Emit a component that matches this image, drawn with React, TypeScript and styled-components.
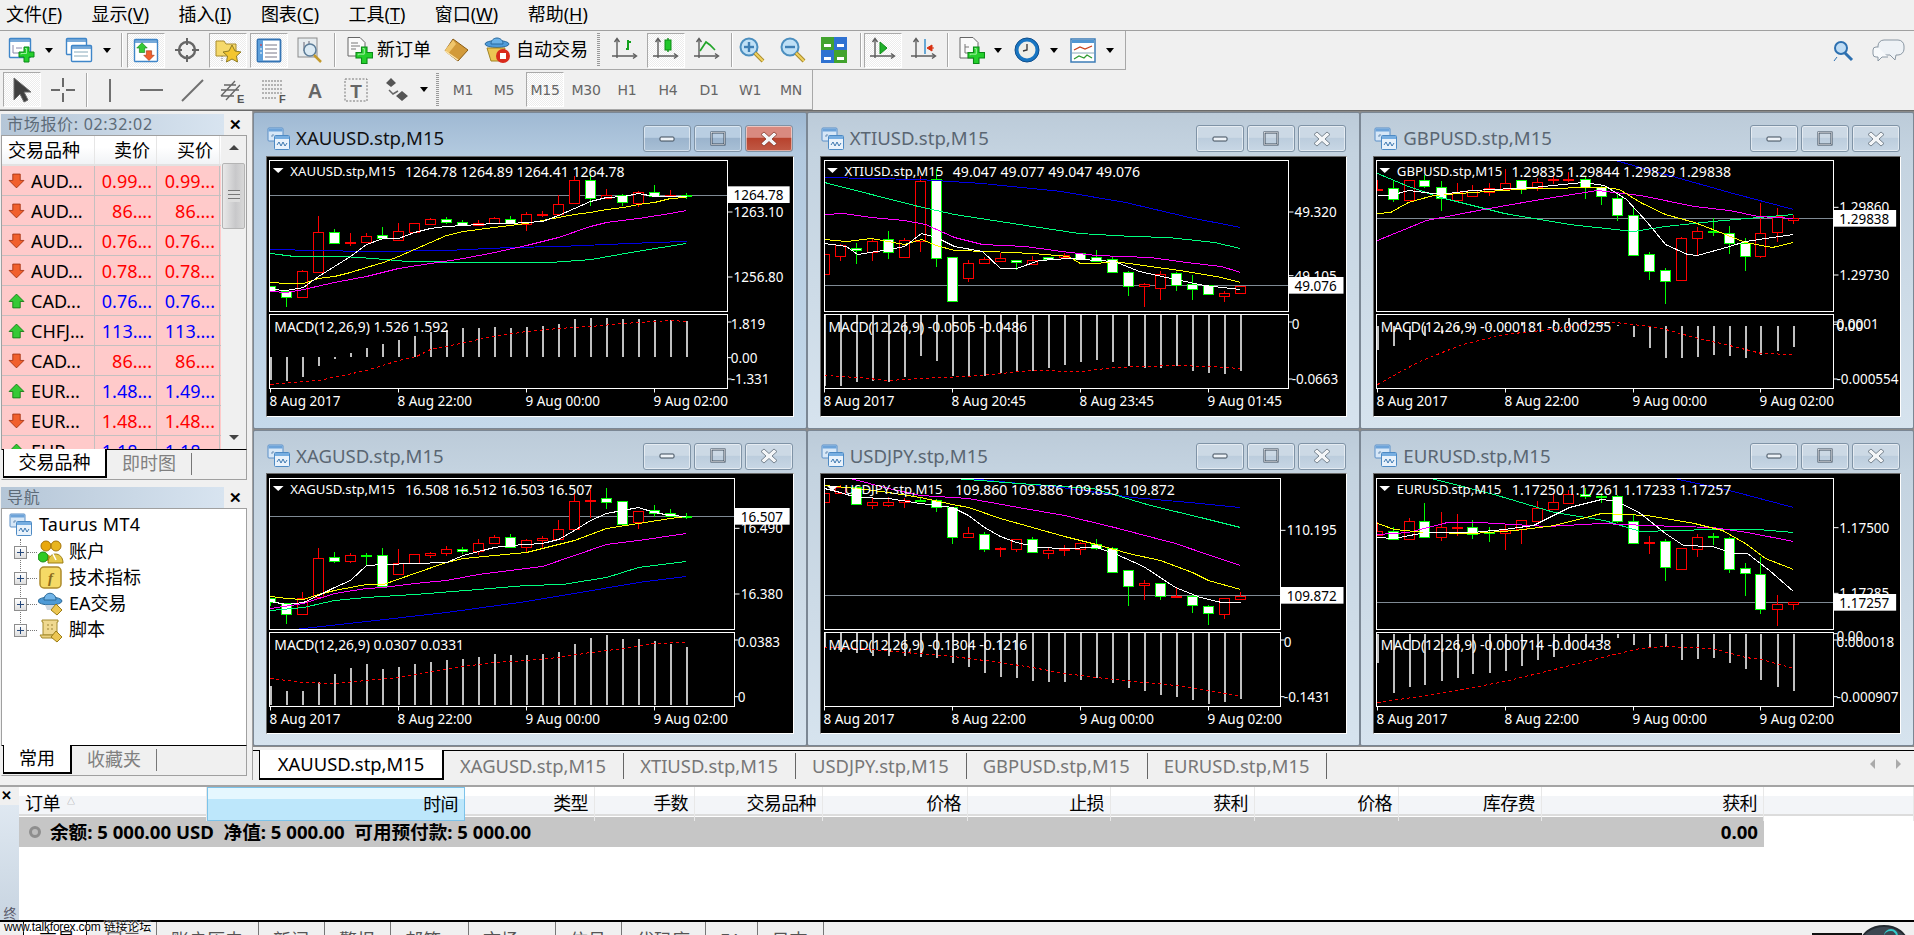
import React from 'react';
import styled, { createGlobalStyle } from 'styled-components';

const FONT = `"Noto Sans", "Noto Sans CJK SC", sans-serif`;

const Global = createGlobalStyle`
  html, body { margin: 0; padding: 0; background: #f0f0f0; overflow: hidden; }
  * { box-sizing: border-box; }
  #root { width: 1914px; height: 935px; }
`;

const Page = styled.div`
  position: relative; width: 1914px; height: 935px; overflow: hidden; display: flex; flex-direction: column;
  background: #f0f0f0; font: 18px/1.2 ${FONT}; color: #000;
`;

/* ---------- menu ---------- */
const MenuBar = styled.div`
  flex: none; height: 31px; display: flex; align-items: center; gap: 29.4px; padding: 0 0 0 6px;
  border-bottom: 1px solid #a0a0a0; background: #f0f0f0;
`;
const MenuItem = styled.span`
  font-size: 18px; white-space: nowrap; u { text-decoration: underline; text-underline-offset: 2px; }
`;

/* ---------- toolbars ---------- */
const ToolRow = styled.div`
  flex: none; display: flex; align-items: stretch; height: ${p => p.$h}px;
`;
const Toolbar = styled.div`
  width: ${p => p.$w}px; display: flex; align-items: center; gap: 3px; padding-left: 3px;
  border-right: 1px solid #a8a8a8; border-bottom: 1px solid #a8a8a8;
`;
const RightTools = styled.div`
  flex: 1; display: flex; justify-content: flex-end; align-items: center; gap: 17px; padding: 0 8px 0 0;
`;
const ToolBtn = styled.div`
  flex: none; width: ${p => p.$w || 38}px; height: 35px; display: flex; align-items: center; justify-content: ${p => p.$w ? 'flex-start' : 'center'};
  gap: 4px; padding-left: ${p => p.$w ? 5 : 0}px; font-size: 18px; color: #000; white-space: nowrap;
  ${p => p.$on ? `
    border: 1px solid; border-color: #a9a9a9 #fff #fff #a9a9a9;
    background: repeating-conic-gradient(#fff 0 25%, #ececec 0 50%) 0 0 / 2px 2px;
  ` : ''}
`;
const TfLabel = styled.span`
  font: 14px "DejaVu Sans", ${FONT}; color: #666; letter-spacing: -0.3px;
`;
const Drop = styled.div`
  flex: none; width: ${p => p.$w}px; margin-left: -3px; display: flex; align-items: center; justify-content: center;
  &::after { content: ''; border: 4.5px solid transparent; border-top: 5px solid #000; border-bottom: 0; }
`;
const Sep = styled.div`
  flex: none; width: 1px; height: 34px; background: #a8a8a8; box-shadow: 1px 0 0 #fff;
  margin: ${p => p.$m || '0 2px'};
`;
const Gripper = styled.div`
  flex: none; width: 3px; height: 34px; margin: ${p => p.$m || '0 3px 0 2px'};
  background: repeating-linear-gradient(#999 0 1px, #f0f0f0 1px 2px);
`;
const Ic = styled.svg`
  flex: none; display: block;
`;

/* ---------- main ---------- */
const MainRow = styled.div`
  flex: none; height: 670px; display: flex; border-top: 1px solid #6a6a6a;
`;
const LeftCol = styled.div`
  flex: none; width: 253px; display: flex; flex-direction: column; border-right: 1px solid #a0a0a0; background: #f0f0f0;
`;
const Dock = styled.section`
  flex: none; height: ${p => p.$h}px; margin-top: ${p => p.$mt}px; padding: 0 5px 0 1px; display: flex; flex-direction: column;
`;
const DockHead = styled.div`
  flex: none; height: 22px; display: flex; align-items: center;
`;
const DockTitle = styled.div`
  width: 223px; height: 21px; padding-left: 6px; color: #5d6b78; font-size: 16px; line-height: 21px; letter-spacing: .7px;
  background: linear-gradient(90deg, #b5c6d7, #d8e4f0);
`;
const Close = styled.div`
  flex: 1; text-align: center; font: bold 15px/21px "Liberation Sans", sans-serif;
`;
const DockBody = styled.div`
  flex: 1; min-height: 0; display: flex; border: 1px solid #a0a0a0; border-bottom: 0; background: #fff;
`;
const TableWrap = styled.div`
  width: 219px; overflow: hidden; background: #fff;
`;
const MwHead = styled.div`
  height: 30px; display: grid; grid-template-columns: 93px 62px 63px; background: linear-gradient(#fff 40%, #f1f3f6);
  border-bottom: 2px solid #e2e2e2;
`;
const HCell = styled.div`
  font-size: 18px; line-height: 28px; text-align: ${p => p.$l ? 'left' : 'right'}; padding: 0 6px; border-right: 1px solid #e6e6e6;
`;
const MwRow = styled.div`
  height: 30px; display: grid; grid-template-columns: 93px 62px 63px; background: #ffcaca; border-bottom: 1px solid #c4c0c0;
`;
const SymCell = styled.div`
  display: flex; align-items: center; gap: 6px; padding: 1px 0 0 6px; border-right: 1px solid #c4c0c0; white-space: nowrap;
`;
const PriceCell = styled.div`
  color: ${p => p.$up ? '#0000ff' : '#ff0000'}; text-align: right; padding-right: 4px; line-height: 30px; border-right: 1px solid #c4c0c0; white-space: nowrap;
`;
const ScrollBar = styled.div`
  flex: 1; background: #f0f0f0; display: flex; flex-direction: column; align-items: center; padding-top: 9px; position: relative;
`;
const ScrollArrow = styled.div`
  border: 5px solid transparent; ${p => p.$up ? 'border-bottom: 5px solid #444; border-top: 0;' : 'border-top: 5px solid #444; border-bottom: 0;'}
`;
const Thumb = styled.div`
  width: 23px; height: 66px; margin-top: 13px; margin-bottom: auto; border: 1px solid #b4b4b4; border-radius: 2px;
  background: linear-gradient(90deg, #e8e8e8, #c8c8ca 60%, #d8d8d8); display: flex; align-items: center; justify-content: center;
  &::after { content: ''; width: 12px; height: 12px; margin-top: 0; background: repeating-linear-gradient(#777 0 1px, #ddd 1px 4px); }
`;
const ScrollEnd = styled.div`
  height: 20px; padding-top: 6px;
`;
const DockTabs = styled.div`
  flex: none; height: ${p => p.$h || 31}px; display: flex; align-items: stretch; border-top: 1px solid #000; padding-left: 1px; background: #f0f0f0;
  border-left: 1px solid #f0f0f0; border-right: 1px solid #a0a0a0; border-bottom: 1px solid #a0a0a0;
`;
const DockTabOn = styled.div`
  width: ${p => p.$w}px; height: 29px; margin-top: -1px; background: #fff; border: 1px solid #000; border-top: 0; border-right-width: 2px; border-bottom-width: 2px;
  text-align: center; line-height: 26px;
`;
const DockTabOff = styled.div`
  padding: 0 15px; height: 22px; margin-top: 3px; line-height: 20px; color: #808080; border-right: 1px solid #777;
`;
const TreeBox = styled.div`
  flex: 1; position: relative; padding: 2px 0 0 7px; background: #fff;
  &::before { content: ''; position: absolute; left: 18px; top: 30px; height: 92px; border-left: 1px dotted #777; }
`;
const TreeRoot = styled.div`
  display: flex; align-items: center; gap: 6px; height: 28px; letter-spacing: .3px;
`;
const TreeRow = styled.div`
  display: flex; align-items: center; height: 26px; padding-left: 5px; position: relative; white-space: nowrap;
`;
const Expander = styled.div`
  width: 13px; height: 13px; border: 1px solid #8d8d8d; background: linear-gradient(#fff, #dedede); position: relative; flex: none; z-index: 1;
  &::before { content: ''; position: absolute; left: 2px; top: 5px; width: 7px; height: 1px; background: #26487a; }
  &::after { content: ''; position: absolute; left: 5px; top: 2px; width: 1px; height: 7px; background: #26487a; }
`;
const Dots = styled.div`
  width: 10px; border-top: 1px dotted #777; flex: none; margin-right: 1px;
`;
const TreeLabel = styled.span`
  margin-left: 5px;
`;

/* ---------- MDI ---------- */
const RightCol = styled.div`
  flex: 1; min-width: 0; display: flex; flex-direction: column;
`;
const Mdi = styled.div`
  flex: none; height: 636px; padding-top: 1px; background: #8a8a8a; display: grid;
  grid-template-columns: repeat(3, 1fr); grid-template-rows: 317px 316px; row-gap: 1px;
`;
const Win = styled.div`
  min-width: 0; display: flex; flex-direction: column; padding: 0 12px 0 12px; border: 1px solid #7b8794; border-radius: 2px;
  background: ${p => p.$on ? 'linear-gradient(#9fb9d3, #b2c9df 40px, #c5d9ea)' : 'linear-gradient(#bccbd9, #c4d3e0 40px, #d6e3ee)'};
`;
const WinHead = styled.div`
  flex: none; height: ${p => p.$h}px; display: flex; align-items: center; padding: 8px 1px 0 1px;
`;
const WinTitle = styled.div`
  flex: 1; margin-left: 5px; font-size: 18.6px; color: ${p => p.$on ? '#111' : '#5a6672'}; white-space: nowrap;
`;
const WinBtn = styled.div`
  flex: none; width: 48px; height: 27px; margin-left: 3px; border: 1px solid #7f93a6; border-radius: 3px; display: flex; align-items: center; justify-content: center;
  background: ${p => p.$close ? 'linear-gradient(#d98a80 0 45%, #b8432e 50%, #c05a46)' : p.$on ? 'linear-gradient(#b9cee2 0 45%, #9bb4cd 50%, #a9c0d6)' : 'linear-gradient(#ccd9e5 0 45%, #bccddd 50%, #c8d7e5)'};
  box-shadow: inset 0 0 0 1px rgba(255,255,255,.5);
`;
const Client = styled.div`
  flex: none; height: 261px; border: 1px solid; border-color: #6b6b6b #fff #fff #6b6b6b; background: #000; overflow: hidden;
`;
const ChartSvg = styled.svg`
  display: block; width: 527px; height: 259px; background: #000;
`;
const CTxt = styled.text`
  font: ${p => p.$fs || 13.5}px "Noto Sans", sans-serif; fill: ${p => p.$fill || '#fff'}; dominant-baseline: central;
`;

/* ---------- chart tabs ---------- */
const TabStrip = styled.div`
  flex: none; height: 30px; margin-top: 3px; border-top: 1px solid #000; display: flex; padding-left: 6px; position: relative; background: #f0f0f0;
`;
const ChartTabOn = styled.div`
  flex: none; width: 185px; height: 30px; margin-top: -1px; background: #fff; border: 1px solid #000; border-top: 0; border-right-width: 2px; border-bottom-width: 2px; text-align: center; font-size: 18.4px; line-height: 28px;
`;
const ChartTab = styled.div`
  flex: none; height: 26px; margin-top: 2px; padding: 0 17px 0 16px; font-size: 18.4px; line-height: 25px; color: #777; border-right: 1px solid #666; white-space: nowrap;
`;
const TabArrows = styled.div`
  margin-left: auto; display: flex; align-items: center; gap: 21px; padding: 0 13px 4px 0;
`;
const TabArrow = styled.div`
  border: 5px solid transparent; ${p => p.$l ? 'border-right: 5px solid #aaa; border-left: 0;' : 'border-left: 5px solid #aaa; border-right: 0;'}
`;

/* ---------- terminal ---------- */
const Terminal = styled.div`
  flex: none; height: 150px; margin-top: 5px; display: flex; border-top: 2px solid #a4a4a4; background: #fff;
`;
const TermStrip = styled.div`
  flex: none; width: 19px; display: flex; flex-direction: column; background: #f0f0f0;
`;
const TermClose = styled.div`
  height: 18px; font: bold 13px/17px "Liberation Sans", sans-serif; padding-left: 1px;
`;
const TermStripFill = styled.div`
  flex: 1; display: flex; flex-direction: column; justify-content: flex-end; align-items: center; overflow: hidden;
  background: linear-gradient(#dfe8f1, #c5d2df);
`;
const TermStripLabel = styled.span`
  writing-mode: vertical-rl; font-size: 13px; line-height: 16px; color: #556; margin-bottom: 2px;
`;
const TermMain = styled.div`
  flex: 1; min-width: 0; display: flex; flex-direction: column;
`;
const THead = styled.div`
  flex: none; height: 29px; display: grid; border-bottom: 2px solid #dcdcdc;
  grid-template-columns: 188px 258px 130px 100px 128px 145px 143px 144px 144px 143px 222px 1fr;
  background: linear-gradient(#fff 35%, #f3f5f8 35%, #f3f5f8);
`;
const TCell = styled.div`
  font-size: 18px; line-height: 32px; padding: 0 6px 0 6px; text-align: ${p => p.$l ? 'left' : 'right'}; border-right: 1px solid #e8e8e8; letter-spacing: -0.6px;
  ${p => p.$hi ? 'background: linear-gradient(#e5f7fe 35%, #bde7fb 35%); border: 1px solid #7cc3ea;' : ''}
  position: relative;
`;
const SortMark = styled.span`
  position: absolute; left: 48px; top: 9px; font-size: 8px; line-height: 10px; color: #999;
`;
const BalRow = styled.div`
  flex: none; width: 1745px; height: 30px; margin-top: 1px; background: #c6c6c6; display: flex; align-items: center; padding: 0 6px 0 10px; font-weight: 700; font-size: 18.6px; white-space: pre;
`;
const BalDot = styled.span`
  width: 12px; height: 12px; margin-right: 9px; border-radius: 50%; background: #bdbdbd; border: 3px solid #8e8e8e; flex: none;
`;
const BalVal = styled.span`
  margin-left: auto;
`;
const TermFill = styled.div`
  flex: 1; background: #fff;
`;
const BottomTabs = styled.div`
  flex: none; height: 15px; border-top: 2px solid #000; display: flex; background: #f0f0f0; overflow: hidden;
  margin-left: -19px; padding-left: 23px; position: relative;
`;
const BTabOn = styled.div`
  flex: none; width: 64px; padding-left: 15px; height: 30px; margin-top: -2px; border-left: 1px solid #000; border-right: 1px solid #000; background: #fff; padding-top: 7px; line-height: 24px; font-size: 18px;
`;
const BTab = styled.div`
  flex: none; padding: 6px 15px 0 ${p => p.$first ? 18 : 14}px; height: 30px; color: #555; border-right: 1px solid #777; line-height: 24px; font-size: 18px; display: flex; white-space: nowrap;
`;
const Badge = styled.span`
  width: ${p => p.$w}px; margin-left: 3px; height: 3px; margin-top: 7px; background: radial-gradient(circle, #f00 1.3px, transparent 1.6px) 0 0 / 7px 3px repeat-x;
`;
const Watermark = styled.div`
  position: absolute; left: 4px; bottom: 1px; font: 12px/14px "Liberation Sans", "Noto Sans CJK SC", sans-serif; color: #000; text-shadow: 0 0 2px #fff, 0 0 2px #fff;
  white-space: nowrap; letter-spacing: -0.2px;
`;
const Corner = styled.div`
  position: absolute; right: 6px; bottom: -26px; width: 48px; height: 36px; border-radius: 50%; background: #3c4650; border: 2px solid #242a30;
  &::before { content: ''; position: absolute; left: -50px; top: 6px; width: 50px; height: 2px; background: #111; }
  &::after { content: ''; position: absolute; right: 8px; top: 2px; width: 12px; height: 12px; border-top: 2px solid #3cc; border-right: 2px solid #3cc; border-radius: 50%; }
`;

/* ---------- icons ---------- */
const S = ({ w = 28, h = 28, vb, children }: any) => <Ic width={w} height={h} viewBox={vb || `0 0 ${w} ${h}`}>{children}</Ic>;
const Plus = ({ x = 0, y = 0, s = 1 }: any) => (
  <g transform={`translate(${x} ${y}) scale(${s})`}>
    <path d="M5 0h5v5h5v5h-5v5H5v-5H0V5h5z" fill="#25cf2c" stroke="#0b8a18" strokeWidth="1" />
    <path d="M6 1.500h1.500v5H2v1" fill="none" stroke="#b7f7b7" strokeWidth=".8" />
  </g>
);
const Axes = ({ x = 0, y = 0 }: any) => (
  <g transform={`translate(${x} ${y})`} stroke="#5c5c5c" fill="none" strokeWidth="1.4">
    <path d="M6 3v19M1 20h24" />
    <path d="M3.500 6L6 2.500 8.500 6M22 17.500L25.500 20 22 22.500" />
  </g>
);
const Pane = ({ x, y, w, h, c = '#3f86c9' }: any) => (
  <g>
    <rect x={x + .5} y={y + .5} width={w} height={h} rx="1" fill="#fff" stroke={c} strokeWidth="1.4" />
    <rect x={x + 1} y={y + 1} width={w - 1} height="3" fill={c} opacity=".7" />
  </g>
);
const Arrow = ({ up, x = 0, y = 0, s = 1 }: any) => (
  <g transform={`translate(${x} ${y}) scale(${s})`}>
    {up
      ? <path d="M8 1l7 7h-3.500v6h-7V8H1z" fill="#35c935" stroke="#117a11" strokeWidth=".8" />
      : <path d="M4.500 1h7v6H15l-7 7-7-7h3.500z" fill="#f1602c" stroke="#a23210" strokeWidth=".8" />}
  </g>
);
const IcNew = () => <S><Pane x={1} y={2} w={21} h={19} /><path d="M5 9v8h13M8 12h6" stroke="#88a" fill="none" /><Plus x={11} y={11} /></S>;
const IcProfile = () => <S><Pane x={1} y={2} w={20} h={16} /><Pane x={6} y={9} w={20} h={16} /><path d="M9 16h14M9 20h14" stroke="#8ab" fill="none" /></S>;
const IcMarket = () => <S><Pane x={2} y={3} w={23} h={22} /><Arrow up x={4} y={6} s={.75} /><Arrow x={11} y={14} s={.75} /></S>;
const IcCross = () => <S><circle cx="14" cy="14" r="8" fill="none" stroke="#666" strokeWidth="2.400" /><path d="M14 2v7M14 19v7M2 14h7M19 14h7" stroke="#666" strokeWidth="2" /></S>;
const IcFav = () => <S><path d="M2 5h8l2 3h10v12H2z" fill="#f5d96b" stroke="#a98b2c" /><path d="M18 9l3 6 6 1-4.500 4 1 6-5.500-3-5.500 3 1-6L9 16l6-1z" fill="#f4c62e" stroke="#8f7b20" /><path d="M8 20v6" stroke="#777" strokeDasharray="1 1" /></S>;
const IcNav = () => <S><rect x="2.500" y="3.500" width="23" height="22" rx="1" fill="#fff" stroke="#3575b5" strokeWidth="1.800" /><rect x="3" y="4" width="5" height="21" fill="#5ea0db" /><path d="M10 9h12M10 13h12M10 17h12M10 21h12" stroke="#778" /><path d="M5 9h2" stroke="#e22" /><path d="M5 13h2M5 17h2" stroke="#fff" /></S>;
const IcData = () => <S><rect x="2" y="2" width="19" height="19" fill="#e7ecef" stroke="#8b8b8b" /><path d="M8 6v9M13 5v10" stroke="#667" /><circle cx="14" cy="14" r="6" fill="#dbeaf4" stroke="#5c7d99" strokeWidth="1.500" /><path d="M18 19l7 7" stroke="#c49a2c" strokeWidth="2.500" /></S>;
const IcOrder = () => <S><path d="M3 1.500h12l5 5V20H3z" fill="#fafafa" stroke="#666" /><path d="M6 7h7M6 10h9M6 13h5" stroke="#777" /><Plus x={11} y={11} s={1.1} /></S>;
const IcBook = () => <S><path d="M10 3l15 11-10 11L2 15z" fill="#d29a3a" stroke="#8a5c14" /><path d="M10 4L2 14l3 4 8-10z" fill="#f0c66c" /><path d="M15 24L2 15" stroke="#fbe4ae" strokeWidth="1.500" /></S>;
const IcAuto = () => <S><ellipse cx="13" cy="8" rx="12" ry="3.500" fill="#4f9bd9" stroke="#2a6a9e" /><path d="M7 8c0-8 12-8 12 0z" fill="#6bb2e8" stroke="#2a6a9e" /><path d="M3 12h18l-4 13H7z" fill="#ecc552" stroke="#a18425" /><circle cx="19" cy="20" r="7" fill="#d92a1c" /><rect x="16" y="17" width="6" height="6" fill="#fff" /></S>;
const IcBars = () => <S><Axes /><path d="M17 4v10M17 6h3M17 13h-2" stroke="#14a11e" strokeWidth="2" fill="none" /></S>;
const IcCandle = () => <S><Axes /><path d="M16 2v14" stroke="#0d8d17" strokeWidth="1.400" /><rect x="13" y="4" width="6" height="10" fill="#22c82b" stroke="#0d8d17" /></S>;
const IcLine = () => <S><Axes /><path d="M7 15l6-9 4 3 5 5" stroke="#22a52a" strokeWidth="1.700" fill="none" /></S>;
const IcZoom = ({ minus }: any) => <S><circle cx="11" cy="11" r="8.500" fill="#bfe0f6" stroke="#4c8fbf" strokeWidth="2" /><path d="M6 11h10" stroke="#3f7fb4" strokeWidth="2.400" />{!minus && <path d="M11 6v10" stroke="#3f7fb4" strokeWidth="2.400" />}<path d="M17 17l8 8" stroke="#a98c2c" strokeWidth="4" /><path d="M17 17l8 8" stroke="#f0d25f" strokeWidth="2" /></S>;
const IcTile = () => <S><rect x="1" y="1" width="13" height="13" fill="#42a32e" /><rect x="14" y="1" width="13" height="13" fill="#2f72d1" /><rect x="1" y="14" width="13" height="13" fill="#2f72d1" /><rect x="14" y="14" width="13" height="13" fill="#42a32e" /><path d="M4 8h7v3H4zM17 8h7v3h-7zM4 21h7v3H4zM17 21h7v3h-7z" fill="#fff" /></S>;
const IcShift = () => <S><Axes /><path d="M11 6l7 6-7 6z" fill="#20b02a" stroke="#0d8d17" /></S>;
const IcScroll = () => <S><Axes /><path d="M15 3v15" stroke="#3a90cc" strokeWidth="1.500" /><path d="M24 12h-4M22 9l-5 3 5 3z" stroke="#d83010" fill="#d83010" /></S>;
const IcTpl = () => <S><path d="M3 1.500h13l5 5V22H3z" fill="#fafafa" stroke="#666" /><path d="M8 8v9h6M8 11h4" stroke="#777" fill="none" /><Plus x={11} y={11} s={1.1} /></S>;
const IcClock = () => <S><circle cx="14" cy="14" r="12" fill="#1976c2" stroke="#0f4e8c" /><circle cx="14" cy="14" r="8.500" fill="#efefe8" /><path d="M14 8v6l-4 1" stroke="#333" fill="none" strokeWidth="1.300" /></S>;
const IcIndi = () => <S><rect x="2" y="3" width="24" height="23" fill="#fff" stroke="#3c7cb6" strokeWidth="1.500" /><rect x="3" y="4" width="22" height="3" fill="#5096d2" /><path d="M5 14l6-3 5 2 7-3" stroke="#c8401c" fill="none" strokeWidth="1.300" /><path d="M3 17h22" stroke="#8ab" /><path d="M5 23l5-3 5 2 3-3 5 3" stroke="#2f9a33" fill="none" strokeWidth="1.300" /></S>;
const IcSearch = () => <S w={24} h={24}><circle cx="10" cy="9" r="6" fill="#bfdcf4" stroke="#2d70b0" strokeWidth="2" /><path d="M6 18l-3 4" stroke="#2d70b0" /><path d="M14 14l7 7" stroke="#2d70b0" strokeWidth="3" /></S>;
const IcChat = () => <S w={34} h={26}><path d="M12 2h14a6 6 0 016 6v3a6 6 0 01-6 6h-2l-1 5-5-5h-6a6 6 0 01-6-6V8a6 6 0 016-6z" fill="#eef2f6" stroke="#8a97a3" /><path d="M6 9H4a3 3 0 00-3 3v4a3 3 0 003 3h2v4l4-4h6" fill="#f7f9fb" stroke="#8a97a3" /></S>;
const IcCursor = () => <S w={24} h={28}><path d="M4 2v22l6-6 4 8 4-2-4-8h7z" fill="#3f3f3f" stroke="#6a6a6a" /></S>;
const IcPlusT = () => <S><path d="M14 2v9M14 17v9M2 14h9M17 14h9" stroke="#6a6a6a" strokeWidth="2" /></S>;
const IcV = () => <S><path d="M14 3v23" stroke="#707070" strokeWidth="2" /></S>;
const IcH = () => <S><path d="M3 14h23" stroke="#707070" strokeWidth="2" /></S>;
const IcT = () => <S><path d="M4 25L25 4" stroke="#707070" strokeWidth="2" /></S>;
const IcE = () => <S><path d="M2 20L16 5M7 24L21 9M2 14h18M5 9h12M2 20h13" stroke="#666" strokeWidth="1.300" /><text x="18" y="27" fontSize="11" fontWeight="700" fontFamily="Liberation Sans" fill="#555">E</text></S>;
const IcF = () => <S><path d="M2 5h20M2 9h20M2 13h20M2 17h20M2 22h15" stroke="#777" strokeDasharray="2 1" /><text x="19" y="27" fontSize="11" fontWeight="700" fontFamily="Liberation Sans" fill="#555">F</text></S>;
const IcA = () => <S><text x="14" y="22" textAnchor="middle" fontSize="20" fontWeight="700" fontFamily="Liberation Sans" fill="#666">A</text></S>;
const IcTB = () => <S><rect x="3" y="3" width="22" height="22" fill="none" stroke="#777" strokeDasharray="2 1.500" /><text x="14" y="22" textAnchor="middle" fontSize="19" fontWeight="700" fontFamily="Liberation Sans" fill="#666">T</text></S>;
const IcShapes = () => <S><path d="M8 2l5 5-5 4-5-4zM19 15l6 5-6 5-6-5z" fill="#555" /><path d="M6 14l4 4 5-3" stroke="#666" fill="none" strokeWidth="1.500" /></S>;
const IcWin = ({ w = 24, h = 24 }: any) => (
  <Ic width={w} height={h} viewBox="0 0 24 24">
    <rect x="1" y="1" width="15" height="13" rx="1" fill="#d7e7f7" stroke="#5a8fc7" />
    <rect x="1.500" y="1.500" width="14" height="3" fill="#6da3d9" />
    <path d="M4 9h2v-2M9 8v3" stroke="#6b8fb4" fill="none" />
    <rect x="7.500" y="8.500" width="15" height="14" rx="1" fill="#e9f2fb" stroke="#4d8ac4" />
    <rect x="8" y="9" width="14" height="3" fill="#77aee1" />
    <path d="M10 18l2-3 2 4 2-4 2 4 2-3" stroke="#3d78b0" fill="none" />
  </Ic>
);
const IcPeople = () => <S w={26} h={26}><circle cx="8" cy="7" r="5" fill="#e8a80c" stroke="#a57408" /><circle cx="18" cy="7" r="5" fill="#e8b520" stroke="#a57408" /><path d="M2 22c0-9 12-9 12 0z" fill="#d8a60f" /><circle cx="5" cy="18" r="5" fill="#2fca24" stroke="#1a8a15" /><path d="M10 24c0-12 15-12 15 0z" fill="#e5c748" stroke="#9c7d14" /><path d="M15 15l3 6" stroke="#fff" strokeWidth="1.500" /></S>;
const IcFn = () => <S w={26} h={26}><rect x="2" y="2" width="21" height="21" rx="4" fill="#f5da66" stroke="#ad8b2c" strokeWidth="1.500" /><text x="12.500" y="18" textAnchor="middle" fontSize="15" fontStyle="italic" fontWeight="700" fontFamily="Liberation Serif" fill="#8a6a1c">f</text></S>;
const IcHat = () => <S w={26} h={26}><ellipse cx="12" cy="10" rx="12" ry="4" fill="#4d9ad6" stroke="#2c6a98" /><path d="M6 9c0-9 12-9 12 0z" fill="#72b5e8" stroke="#2c6a98" /><path d="M7 14h10l-3 5H9z" fill="#cfd7df" /><path d="M18 13l6 6-5 5-6-5z" fill="#ecc653" stroke="#9c7d14" /></S>;
const IcScrollDoc = () => <S w={26} h={26}><path d="M4 3h16v2h-1v13H5V5H4z" fill="#f0d990" stroke="#a48a2c" /><path d="M2 18h13v3H4z" fill="#ead07e" stroke="#a48a2c" /><path d="M9 8h2M13 8h2M9 12h2M13 12h2" stroke="#998136" /><path d="M18 14l6 6-5 5-6-5z" fill="#ecc653" stroke="#9c7d14" /></S>;

/* ---------- chart data: coordinates read off the reference ---------- */
type Candle = [string, number, number, number, number];
type ChartSpec = {
  title: string; ohlc: string; ohlcX: number; macd: string; col: number; row: number; rectL: number; rectR: number; x0: number; c: Candle[];
  white: number[][]; yellow: number[][]; magenta: number[][]; green: number[][]; blue: number[][];
  price: number; pLabel: string; boxR: number; axis: [string, number][]; mZero: number; bars: number[]; sig: number[][]; mAxis: [string, number][]; times: string[]; on?: boolean;
};
const C = (s: string): Candle[] => s.trim().split(/\s*\|\s*/).map(r => { const p = r.split(' '); return [p[0], +p[1], +p[2], +p[3], +p[4]] as Candle; });
const T4 = ['8 Aug 2017', '8 Aug 22:00', '9 Aug 00:00', '9 Aug 02:00'];

const charts: ChartSpec[] = [
  {
    title: 'XAUUSD.stp,M15', ohlc: '1264.78 1264.89 1264.41 1264.78', ohlcX: 380, macd: 'MACD(12,26,9) 1.526 1.592', col: 0, row: 0, rectL: 40, rectR: 1322, x0: 43, on: true,
    c: C(`g 530 545 530 545|g 545 565 545 593|r 487 565 482 565|r 370 490 320 490|g 370 403 360 403|r 400 403 372 412|r 382 400 372 402|g 379 386 354 388|r 365 394 342 394|r 343 368 343 372|r 331 344 328 345|g 331 338 324 344|g 338 348 334 352|r 342 349 334 351|r 328 343 325 345|g 329 343 320 345|r 316 344 310 365|r 314 317 305 325|r 284 314 258 316|r 214 283 200 285|g 214 268 198 290|r 258 266 240 268|g 259 280 256 292|r 248 282 246 293|g 248 260 228 262|r 257 260 243 265|g 257 258 252 269`),
    white: [[43,540],[88,542],[133,535],[177,500],[222,470],[267,440],[312,405],[357,388],[401,388],[446,370],[491,356],[536,352],[581,347],[625,345],[670,342],[715,342],[760,338],[804,335],[849,318],[894,298],[939,275],[984,265],[1029,262],[1073,252],[1118,260],[1163,262],[1208,262]],
    yellow: [[43,520],[88,523],[133,523],[177,508],[222,500],[267,490],[312,475],[357,458],[401,440],[446,420],[491,400],[536,377],[581,366],[625,360],[670,353],[715,349],[760,342],[804,333],[849,324],[894,315],[939,310],[984,301],[1029,295],[1073,285],[1118,278],[1163,268],[1208,264]],
    magenta: [[43,547],[88,548],[133,540],[222,520],[312,500],[401,478],[491,462],[581,448],[670,430],[760,408],[849,385],[939,352],[984,340],[1073,328],[1163,313],[1208,304]],
    green: [[43,433],[110,441],[245,442],[330,448],[425,455],[605,460],[826,460],[940,450],[1050,430],[1208,402]],
    blue: [[43,421],[312,425],[536,422],[715,415],[850,410],[984,404],[1118,400],[1208,397]],
    price: 257, pLabel: '1264.78', boxR: 1497, axis: [['1263.10', 309], ['1256.80', 504]],
    mZero: 744, bars: [812,816,803,771,750,733,717,705,693,682,670,664,658,658,655,658,654,652,645,630,628,628,630,630,632,632,635],
    sig: [[43,826],[133,816],[177,812],[312,782],[401,754],[446,743],[491,720],[536,710],[625,690],[670,680],[760,665],[849,658],[939,650],[1029,643],[1118,636],[1163,634],[1208,635]],
    mAxis: [['1.819', 645], ['0.00', 746], ['-1.331', 810]], times: T4,
  },
  {
    title: 'XTIUSD.stp,M15', ohlc: '49.047 49.077 49.047 49.076', ohlcX: 362, macd: 'MACD(12,26,9) -0.0505 -0.0486', col: 1, row: 0, rectL: 36, rectR: 1337, x0: 37,
    c: C(`r 435 494 405 494|r 408 440 405 455|g 418 424 402 465|r 397 429 390 455|g 391 430 366 450|r 394 443 388 445|r 217 395 200 430|g 210 448 180 473|g 445 575 445 575|r 463 506 453 518|r 451 461 445 461|r 448 455 432 455|g 454 460 454 482|r 452 464 442 464|g 445 451 445 451|r 437 444 433 447|g 433 450 433 450|g 443 455 423 460|g 450 490 445 490|g 490 532 487 560|r 526 532 523 593|r 494 538 485 572|g 491 528 490 545|g 525 541 498 572|g 529 556 529 556|r 553 562 547 578|r 530 553 530 553`),
    blue: [[37,203],[300,210],[480,222],[700,247],[880,280],[1060,325],[1202,355]],
    green: [[37,218],[170,255],[300,290],[400,315],[620,352],[750,372],[900,381],[1000,385],[1130,400],[1202,417]],
    magenta: [[37,316],[90,313],[170,323],[260,332],[320,345],[400,383],[480,405],[600,412],[700,425],[800,437],[950,445],[1050,460],[1150,470],[1202,490]],
    yellow: [[37,391],[100,397],[170,388],[260,405],[310,390],[350,408],[400,422],[500,425],[620,433],[720,440],[755,463],[800,463],[850,455],[950,470],[1050,485],[1150,505],[1202,520]],
    white: [[37,402],[100,410],[130,435],[220,420],[260,410],[310,373],[350,385],[400,412],[480,425],[530,478],[575,478],[640,452],[720,447],[800,452],[850,455],[920,487],[1020,510],[1100,528],[1202,540]],
    price: 529, pLabel: '49.076', boxR: 1492, axis: [['49.320', 309], ['49.105', 500]],
    mZero: 614, bars: [830,830,818,815,818,805,740,755,800,800,800,792,790,785,778,768,760,752,758,770,778,778,770,785,792,795,785],
    sig: [[37,797],[130,805],[220,812],[300,808],[440,800],[620,782],[760,787],[850,773],[1020,767],[1112,770],[1202,778]],
    mAxis: [['0', 645], ['-0.0663', 810]], times: ['8 Aug 2017', '8 Aug 20:45', '8 Aug 23:45', '9 Aug 01:45'],
  },
  {
    title: 'GBPUSD.stp,M15', ohlc: '1.29835 1.29844 1.29829 1.29838', ohlcX: 380, macd: 'MACD(12,26,9) -0.000181 -0.000255', col: 2, row: 0, rectL: 60, rectR: 1340, x0: 62,
    c: C(`r 241 244 212 245|g 238 271 212 278|r 214 272 214 272|g 214 232 197 238|g 233 268 216 306|r 250 272 222 272|r 242 260 228 260|r 238 250 222 260|r 223 240 180 240|g 214 241 214 255|r 220 235 208 246|r 211 213 198 225|r 209 211 188 218|g 209 233 205 270|g 234 262 232 288|g 268 319 250 335|g 317 439 297 439|g 436 487 430 513|g 484 517 477 585|r 388 514 385 517|r 367 388 355 438|g 365 367 327 380|g 371 403 351 435|g 403 442 388 486|r 373 442 282 447|r 320 370 297 400|r 328 334 318 345`),
    blue: [[730,152],[900,205],[1050,250],[1228,300]],
    green: [[62,192],[150,232],[240,265],[420,312],[600,345],[780,365],[870,352],[1000,335],[1130,323],[1228,316]],
    magenta: [[62,393],[200,332],[360,300],[520,270],[680,243],[800,258],[950,290],[1050,303],[1130,322],[1228,326]],
    yellow: [[62,313],[100,308],[150,280],[220,258],[330,250],[500,238],[700,233],[740,240],[800,280],[870,315],[950,340],[1010,362],[1094,400],[1170,413],[1228,400]],
    white: [[62,258],[100,258],[150,242],[240,255],[330,242],[500,235],[640,218],[700,228],[760,270],[820,340],[870,405],[930,435],[960,438],[1050,410],[1094,395],[1170,385],[1228,375]],
    price: 328, pLabel: '1.29838', boxR: 1517, axis: [['1.29860', 295], ['1.29730', 498]],
    mZero: 651, bars: [722,710,693,680,672,665,660,655,652,640,645,632,628,632,640,648,684,716,746,746,743,738,740,746,738,725,714],
    sig: [[62,825],[180,755],[300,705],[420,675],[550,660],[640,645],[730,638],[850,655],[950,685],[1050,708],[1138,733],[1228,736]],
    mAxis: [['0.0001', 645], ['0.00', 652], ['-0.000554', 810]], times: T4,
  },
  {
    title: 'XAGUSD.stp,M15', ohlc: '16.508 16.512 16.503 16.507', ohlcX: 380, macd: 'MACD(12,26,9) 0.0307 0.0331', col: 0, row: 1, rectL: 40, rectR: 1342, x0: 43,
    c: C(`g 503 516 503 528|g 518 553 518 582|r 503 553 486 553|r 385 500 354 500|g 382 394 366 400|r 376 394 370 398|g 374 376 370 405|g 376 468 354 470|r 400 433 358 433|r 373 400 373 403|r 370 374 365 383|r 358 368 348 378|g 358 364 350 372|r 340 363 327 375|r 322 340 316 342|g 322 350 312 350|r 331 350 327 370|r 325 331 318 358|r 296 326 270 330|r 214 296 190 300|r 209 214 180 263|g 205 217 175 237|g 214 281 214 285|r 242 277 242 298|g 240 249 225 260|g 250 257 238 262|g 258 259 250 268`),
    white: [[43,512],[88,522],[133,515],[177,495],[222,470],[267,450],[312,405],[357,402],[446,398],[536,395],[581,375],[625,362],[670,350],[715,346],[804,340],[849,327],[894,300],[939,270],[984,250],[1073,232],[1118,245],[1163,255],[1208,258]],
    yellow: [[43,497],[88,503],[133,508],[177,493],[222,480],[312,463],[357,462],[446,430],[536,397],[581,385],[670,375],[760,367],[849,343],[894,330],[984,293],[1073,278],[1163,265],[1208,258]],
    magenta: [[43,533],[133,520],[222,490],[312,475],[357,470],[446,458],[536,450],[625,433],[715,420],[804,407],[894,375],[984,342],[1073,330],[1208,310]],
    green: [[43,540],[133,530],[222,510],[312,502],[446,492],[625,478],[760,465],[860,463],[984,442],[1073,412],[1208,394]],
    blue: [[110,596],[312,572],[536,545],[760,512],[894,488],[1073,455],[1208,439]],
    price: 259, pLabel: '16.507', boxR: 1497, axis: [['16.490', 295], ['16.380', 492]],
    mZero: 825, bars: [768,783,783,755,732,714,702,717,711,702,696,690,687,682,672,675,675,672,666,642,624,615,627,627,632,642,651],
    sig: [[43,743],[133,755],[222,758],[312,750],[401,742],[491,722],[581,707],[670,697],[760,690],[849,680],[939,667],[1029,655],[1118,640],[1208,637]],
    mAxis: [['0.0383', 636], ['0', 800]], times: T4,
  },
  {
    title: 'USDJPY.stp,M15', ohlc: '109.860 109.886 109.855 109.872', ohlcX: 369, macd: 'MACD(12,26,9) -0.1304 -0.1216', col: 1, row: 1, rectL: 36, rectR: 1315, x0: 37,
    c: C(`r 190 215 190 215|r 172 190 165 190|g 172 223 172 223|r 216 224 205 236|r 216 224 200 230|r 211 215 205 233|g 211 212 205 216|g 211 230 208 245|g 230 322 230 342|r 310 322 292 322|g 313 358 306 365|r 355 358 352 380|r 328 358 328 365|g 328 367 322 370|r 361 368 350 386|r 357 361 346 377|r 340 357 335 375|g 341 353 327 360|g 354 425 350 427|g 421 469 421 528|r 460 466 450 510|g 460 499 460 510|r 497 502 470 505|g 498 526 495 548|g 529 550 525 585|r 505 553 503 567|r 497 506 487 506`),
    white: [[37,175],[82,185],[127,200],[217,205],[306,218],[396,232],[440,255],[485,290],[530,318],[575,335],[640,352],[709,355],[798,352],[850,370],[930,408],[1020,470],[1090,502],[1150,515],[1202,517]],
    yellow: [[37,165],[127,175],[217,185],[306,200],[396,222],[440,232],[530,265],[620,290],[709,318],[798,343],[888,368],[978,390],[1068,425],[1112,450],[1202,478]],
    magenta: [[110,145],[217,175],[306,195],[440,205],[580,230],[709,255],[850,290],[1020,340],[1110,372],[1202,405]],
    green: [[400,145],[580,158],[790,175],[950,225],[1100,265],[1202,292]],
    blue: [[440,145],[700,172],[900,200],[1060,215],[1202,230]],
    price: 496, pLabel: '109.872', boxR: 1492, axis: [['110.195', 301]],
    mZero: 605, bars: [650,665,670,678,678,678,680,683,698,710,730,740,745,752,755,755,750,745,758,773,783,795,800,810,822,815,808],
    sig: [[37,650],[130,655],[260,665],[396,678],[530,697],[620,712],[709,728],[800,742],[933,755],[1023,765],[1112,780],[1202,797]],
    mAxis: [['0', 636], ['-0.1431', 800]], times: T4,
  },
  {
    title: 'EURUSD.stp,M15', ohlc: '1.17250 1.17261 1.17233 1.17257', ohlcX: 381, macd: 'MACD(12,26,9) -0.000714 -0.000438', col: 2, row: 1, rectL: 60, rectR: 1340, x0: 62,
    c: C(`r 302 316 275 316|g 304 328 290 330|r 274 326 264 328|g 274 322 218 322|r 292 322 245 332|r 290 293 252 318|g 290 312 270 326|g 307 309 290 336|r 300 310 282 360|r 271 296 271 342|r 235 272 212 272|r 217 236 190 236|r 193 218 180 218|g 193 199 175 207|g 198 200 190 218|g 199 272 195 278|g 272 340 255 340|r 337 340 318 372|g 334 412 328 452|r 355 416 355 416|r 320 358 313 382|g 319 321 308 345|g 323 418 320 428|g 415 430 400 498|g 433 536 382 552|r 523 536 495 588|r 517 523 515 540`),
    white: [[62,320],[110,325],[197,305],[330,305],[420,298],[500,285],[600,232],[690,208],[735,212],[800,250],[870,310],[920,345],[1000,348],[1060,368],[1100,370],[1160,420],[1228,483]],
    yellow: [[62,280],[110,298],[197,305],[330,310],[450,300],[560,285],[690,250],[820,255],[950,280],[1030,300],[1094,340],[1150,385],[1228,418]],
    magenta: [[62,312],[150,305],[260,276],[350,275],[540,288],[690,280],[820,285],[1000,290],[1100,305],[1228,333]],
    green: [[215,143],[400,195],[560,245],[700,270],[800,302],[1000,298],[1130,298],[1228,305]],
    blue: [[895,143],[1050,180],[1228,232]],
    price: 517, pLabel: '1.17257', boxR: 1517, axis: [['1.17500', 293], ['1.17285', 490]],
    mZero: 612, bars: [700,790,770,765,752,745,732,730,722,707,690,680,660,650,640,625,645,650,652,690,687,685,700,717,750,770,782],
    sig: [[62,817],[180,797],[300,777],[420,752],[560,718],[690,680],[800,655],[860,648],[1000,655],[1094,680],[1138,688],[1228,715]],
    mAxis: [['0.00', 617], ['0.000018', 636], ['-0.000907', 800]], times: T4,
  },
];

const LEFTS = [33.6, 29, 55];
const TOPS = [144, 132];

const Chart = ({ s }: { s: ChartSpec }) => {
  const L = LEFTS[s.col], Tp = TOPS[s.row], d = s.row === 0 ? 0 : -9;
  const X = (p: number) => (p - L) / 2.8;
  const Y = (p: number) => (p - Tp) / 3;
  const pts = (a: number[][]) => a.map(([x, y]) => `${Math.round(X(x)) + .5},${Math.round(Y(y)) + .5}`).join(' ');
  const rx0 = Math.round(X(s.rectL)) + .5, rx1 = Math.round(X(s.rectR)) + .5;
  const ry0 = Math.round(Y(152 + d)) + .5, ry1 = Math.round(Y(607 + d)) + .5;
  const sy0 = Math.round(Y(614 + d)) + .5, sy1 = Math.round(Y(837 + d)) + .5;
  const tick = (i: number) => Math.round(X(s.x0 + 44.8 * i * 8)) + .5;
  const cid = `m${s.col}${s.row}`, sid = `s${s.col}${s.row}`;
  return (
    <ChartSvg viewBox="0 0 527 259">
      <defs>
        <clipPath id={cid}><rect x={rx0} y={ry0} width={rx1 - rx0 + 6} height={ry1 - ry0} /></clipPath>
        <clipPath id={sid}><rect x={rx0} y={sy0} width={rx1 - rx0} height={sy1 - sy0} /></clipPath>
      </defs>
      <g clipPath={`url(#${cid})`}>
        <line x1={rx0} x2={rx1} y1={Math.round(Y(s.price)) + .5} y2={Math.round(Y(s.price)) + .5} stroke="#7f8a94" />
        <g shapeRendering="crispEdges">
          {s.c.map(([t, top, bot, hi, lo], i) => {
            const x = Math.round(X(s.x0 + 44.8 * i));
            const up = t === 'g';
            const col = up ? '#00ff00' : '#ff0000';
            const y0 = Math.round(Y(top)), y1 = Math.max(Math.round(Y(bot)), y0 + 1);
            return (
              <g key={i}>
                <line x1={x + .5} x2={x + .5} y1={Y(hi)} y2={Y(lo)} stroke={col} />
                <rect x={x - 5 + .5} y={y0 + .5} width={10} height={y1 - y0} fill={up ? '#fff' : '#000'} stroke={col} />
              </g>
            );
          })}
        </g>
        <g shapeRendering="crispEdges" fill="none" strokeWidth="1">
          <polyline points={pts(s.blue)} stroke="#0000e6" />
          <polyline points={pts(s.green)} stroke="#00ff7f" />
          <polyline points={pts(s.magenta)} stroke="#ff00ff" />
          <polyline points={pts(s.yellow)} stroke="#ffff00" />
          <polyline points={pts(s.white)} stroke="#ffffff" />
        </g>
      </g>
      <g clipPath={`url(#${sid})`}>
        <g shapeRendering="crispEdges">
          {s.bars.map((v, i) => {
            const x = Math.round(X(s.x0 + 44.8 * i));
            const a = Math.round(Y(Math.min(v, s.mZero))), b = Math.round(Y(Math.max(v, s.mZero)));
            return <rect key={i} x={x} y={a} width={2} height={Math.max(b - a, 1)} fill="#c0c0c0" />;
          })}
        </g>
        <polyline points={pts(s.sig)} fill="none" stroke="#ff0000" strokeDasharray="3 3" shapeRendering="crispEdges" />
      </g>
      <rect x={rx0} y={ry0} width={rx1 - rx0} height={ry1 - ry0} fill="none" stroke="#fff" shapeRendering="crispEdges" />
      <rect x={rx0} y={sy0} width={rx1 - rx0} height={sy1 - sy0} fill="none" stroke="#fff" shapeRendering="crispEdges" />
      <polygon points={`${X(s.rectL + 10)},${Y(177 + d)} ${X(s.rectL + 40)},${Y(177 + d)} ${X(s.rectL + 25)},${Y(192 + d)}`} fill="#fff" />
      <CTxt x={X(s.rectL + 59)} y={Y(186 + d)} $fs={13.2}>{s.title}</CTxt>
      <CTxt x={X(s.rectL + s.ohlcX)} y={Y(186 + d)} $fs={14.1}>{s.ohlc}</CTxt>
      <CTxt x={X(s.rectL + 14)} y={Y(651 + d)} $fs={13.9}>{s.macd}</CTxt>
      {s.axis.map(([t, y]) => (
        <g key={t}>
          <line x1={rx1} x2={rx1 + 5} y1={Y(y)} y2={Y(y)} stroke="#fff" />
          <CTxt x={X(s.rectR + 18)} y={Y(y)}>{t}</CTxt>
        </g>
      ))}
      {s.mAxis.map(([t, y]) => (
        <g key={t}>
          <line x1={rx1} x2={rx1 + 4} y1={Y(y + 6 * (y < 700 ? -1 : 0))} y2={Y(y + 6 * (y < 700 ? -1 : 0))} stroke="#fff" />
          <CTxt x={X(s.rectR + 10)} y={Y(y)}>{t}</CTxt>
        </g>
      ))}
      <rect x={X(s.rectR + 2)} y={Y(s.price - 25)} width={(s.boxR - s.rectR - 2) / 2.8} height={50 / 3} fill="#fff" />
      <CTxt x={X(s.rectR + 18)} y={Y(s.price + 1)} $fill="#000">{s.pLabel}</CTxt>
      {s.times.map((t, i) => (
        <g key={t}>
          <line x1={tick(i)} x2={tick(i)} y1={sy1} y2={sy1 + 4} stroke="#fff" />
          <CTxt x={tick(i) - 1} y={Y(877 + d)}>{t}</CTxt>
        </g>
      ))}
    </ChartSvg>
  );
};

const WinIconBtn = ({ kind, on }: any) => (
  <WinBtn $close={kind === 'x' && on} $on={on}>
    <Ic width="20" height="18" viewBox="0 0 20 18">
      {kind === 'min' && <rect x="3" y="7" width="14" height="4" rx="1" fill="#eef3f8" stroke="#3d4a58" />}
      {kind === 'max' && <><rect x="3.500" y="2.500" width="13" height="12" fill="none" stroke="#3d4a58" strokeWidth="2" /><rect x="3.500" y="2.500" width="13" height="12" fill="none" stroke="#f4f6f8" strokeWidth=".6" /></>}
      {kind === 'x' && <path d="M5 2l5 4.500L15 2l3 2.500-5 4.500 5 4.500L15 16l-5-4.500L5 16l-3-2.500L7 9 2 4.500z" fill="#f3f5f7" stroke={on ? '#7a2416' : '#4e5b68'} strokeWidth=".7" />}
    </Ic>
  </WinBtn>
);

const Window = ({ s }: { s: ChartSpec }) => (
  <Win $on={s.on}>
    <WinHead $h={s.row === 0 ? 43 : 42}>
      <IcWin />
      <WinTitle $on={s.on}>{s.title}</WinTitle>
      <WinIconBtn kind="min" on={s.on} />
      <WinIconBtn kind="max" on={s.on} />
      <WinIconBtn kind="x" on={s.on} />
    </WinHead>
    <Client><Chart s={s} /></Client>
  </Win>
);

const mw: [boolean, string, string, string][] = [
  [false, 'AUD...', '0.99...', '0.99...'], [false, 'AUD...', '86....', '86....'], [false, 'AUD...', '0.76...', '0.76...'], [false, 'AUD...', '0.78...', '0.78...'],
  [true, 'CAD...', '0.76...', '0.76...'], [true, 'CHFJ...', '113....', '113....'], [false, 'CAD...', '86....', '86....'], [true, 'EUR...', '1.48...', '1.49...'],
  [false, 'EUR...', '1.48...', '1.48...'], [true, 'EUR...', '1.18...', '1.18...'],
];

const menus: [string, string][] = [['文件', 'F'], ['显示', 'V'], ['插入', 'I'], ['图表', 'C'], ['工具', 'T'], ['窗口', 'W'], ['帮助', 'H']];
const order = ['XAUUSD', 'XAGUSD', 'XTIUSD', 'USDJPY', 'GBPUSD', 'EURUSD'];
const cols: [string, boolean?, boolean?][] = [['订单', true], ['时间', false, true], ['类型'], ['手数'], ['交易品种'], ['价格'], ['止损'], ['获利'], ['价格'], ['库存费'], ['获利'], ['']];
const tf = ['M1', 'M5', 'M15', 'M30', 'H1', 'H4', 'D1', 'W1', 'MN'];

export default function App() {
  return (
    <Page>
      <Global />
      <MenuBar>
        {menus.map(([t, k]) => <MenuItem key={k}>{t}(<u>{k}</u>)</MenuItem>)}
      </MenuBar>
      <ToolRow $h={39}>
        <Toolbar $w={1126}>
          <ToolBtn><IcNew /></ToolBtn><Drop $w={16} />
          <ToolBtn><IcProfile /></ToolBtn><Drop $w={18} />
          <Sep />
          <ToolBtn $on><IcMarket /></ToolBtn>
          <ToolBtn><IcCross /></ToolBtn>
          <ToolBtn $on><IcFav /></ToolBtn>
          <ToolBtn $on><IcNav /></ToolBtn>
          <ToolBtn><IcData /></ToolBtn>
          <Sep />
          <ToolBtn $w={95}><IcOrder />新订单</ToolBtn>
          <ToolBtn><IcBook /></ToolBtn>
          <ToolBtn $w={113}><IcAuto />自动交易</ToolBtn>
          <Gripper />
          <ToolBtn><IcBars /></ToolBtn>
          <ToolBtn $on><IcCandle /></ToolBtn>
          <ToolBtn><IcLine /></ToolBtn>
          <Sep $m="0 -2px 0 2px" />
          <ToolBtn><IcZoom /></ToolBtn>
          <ToolBtn><IcZoom minus /></ToolBtn>
          <ToolBtn><IcTile /></ToolBtn>
          <Sep $m="0 0 0 4px" />
          <ToolBtn $on><IcShift /></ToolBtn>
          <ToolBtn><IcScroll /></ToolBtn>
          <Sep $m="0 1px 0 1px" />
          <ToolBtn><IcTpl /></ToolBtn><Drop $w={15} />
          <ToolBtn><IcClock /></ToolBtn><Drop $w={15} />
          <ToolBtn><IcIndi /></ToolBtn><Drop $w={15} />
        </Toolbar>
        <RightTools><IcSearch /><IcChat /></RightTools>
      </ToolRow>
      <ToolRow $h={40}>
        <Toolbar $w={813}>
          <ToolBtn $on><IcCursor /></ToolBtn>
          <ToolBtn><IcPlusT /></ToolBtn>
          <Sep $m="0 1px 0 1px" />
          <ToolBtn><IcV /></ToolBtn>
          <ToolBtn><IcH /></ToolBtn>
          <ToolBtn><IcT /></ToolBtn>
          <ToolBtn><IcE /></ToolBtn>
          <ToolBtn><IcF /></ToolBtn>
          <ToolBtn><IcA /></ToolBtn>
          <ToolBtn><IcTB /></ToolBtn>
          <ToolBtn><IcShapes /></ToolBtn><Drop $w={15} />
          <Gripper $m="0 2px 0 2px" />
          {tf.map(t => <ToolBtn key={t} $on={t === 'M15'}><TfLabel>{t}</TfLabel></ToolBtn>)}
        </Toolbar>
      </ToolRow>
      <MainRow>
        <LeftCol>
          <Dock $h={367} $mt={2}>
            <DockHead><DockTitle>市场报价: 02:32:02</DockTitle><Close>✕</Close></DockHead>
            <DockBody>
              <TableWrap>
                <MwHead><HCell $l>交易品种</HCell><HCell>卖价</HCell><HCell>买价</HCell></MwHead>
                {mw.map(([up, a, b, c], i) => (
                  <MwRow key={i}>
                    <SymCell>
                      <Ic width="17" height="17" viewBox="0 0 16 16"><Arrow up={up} /></Ic>
                      {a}
                    </SymCell>
                    <PriceCell $up={up}>{b}</PriceCell>
                    <PriceCell $up={up}>{c}</PriceCell>
                  </MwRow>
                ))}
              </TableWrap>
              <ScrollBar>
                <ScrollArrow $up />
                <Thumb />
                <ScrollEnd><ScrollArrow /></ScrollEnd>
              </ScrollBar>
            </DockBody>
            <DockTabs>
              <DockTabOn $w={104}>交易品种</DockTabOn>
              <DockTabOff>即时图</DockTabOff>
            </DockTabs>
          </Dock>
          <Dock $h={290} $mt={6}>
            <DockHead><DockTitle>导航</DockTitle><Close>✕</Close></DockHead>
            <DockBody>
              <TreeBox>
                <TreeRoot><IcWin w={24} h={24} />Taurus MT4</TreeRoot>
                <TreeRow><Expander /><Dots /><IcPeople /><TreeLabel>账户</TreeLabel></TreeRow>
                <TreeRow><Expander /><Dots /><IcFn /><TreeLabel>技术指标</TreeLabel></TreeRow>
                <TreeRow><Expander /><Dots /><IcHat /><TreeLabel>EA交易</TreeLabel></TreeRow>
                <TreeRow><Expander /><Dots /><IcScrollDoc /><TreeLabel>脚本</TreeLabel></TreeRow>
              </TreeBox>
            </DockBody>
            <DockTabs>
              <DockTabOn $w={69}>常用</DockTabOn>
              <DockTabOff>收藏夹</DockTabOff>
            </DockTabs>
          </Dock>
        </LeftCol>
        <RightCol>
          <Mdi>
            {charts.map(s => <Window key={s.title} s={s} />)}
          </Mdi>
          <TabStrip>
            <ChartTabOn>XAUUSD.stp,M15</ChartTabOn>
            {order.slice(1).map(n => <ChartTab key={n}>{n}.stp,M15</ChartTab>)}
            <TabArrows><TabArrow $l /><TabArrow /></TabArrows>
          </TabStrip>
        </RightCol>
      </MainRow>
      <Terminal>
        <TermStrip>
          <TermClose>✕</TermClose>
          <TermStripFill><TermStripLabel>终端</TermStripLabel></TermStripFill>
        </TermStrip>
        <TermMain>
          <THead>
            {cols.map(([t, l, hi], i) => (
              <TCell key={i} $l={l} $hi={hi}>{t}{i === 0 && <SortMark>△</SortMark>}</TCell>
            ))}
          </THead>
          <BalRow>
            <BalDot />余额: 5 000.00 USD  净值: 5 000.00  可用预付款: 5 000.00
            <BalVal>0.00</BalVal>
          </BalRow>
          <TermFill />
          <BottomTabs>
            <BTabOn>交易</BTabOn>
            <BTab $first>展示</BTab>
            <BTab>账户历史</BTab>
            <BTab>新闻</BTab>
            <BTab>警报</BTab>
            <BTab>邮箱<Badge $w={9} /></BTab>
            <BTab>市场<Badge $w={18} /></BTab>
            <BTab>信号</BTab>
            <BTab>代码库</BTab>
            <BTab>EA</BTab>
            <BTab>日志</BTab>
          </BottomTabs>
        </TermMain>
      </Terminal>
      <Watermark>www.talkforex.com 链接论坛</Watermark>
      <Corner />
    </Page>
  );
}
